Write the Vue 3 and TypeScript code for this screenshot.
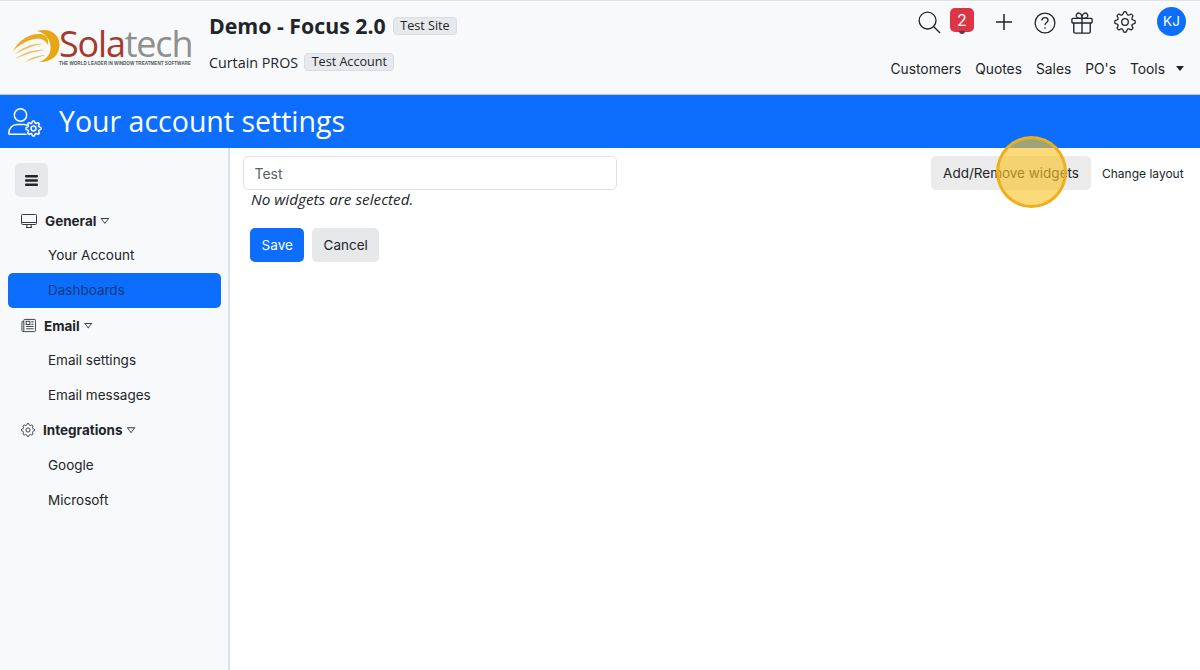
<script setup lang="ts">
const topLinks: string[] = ['Customers', 'Quotes', 'Sales', "PO's"]

function gearPath(cx: number, cy: number, outer: number, inner: number, teeth: number): string {
  const step = (Math.PI * 2) / teeth
  const pt = (a: number, r: number) =>
    `${(cx + Math.sin(a) * r).toFixed(2)} ${(cy - Math.cos(a) * r).toFixed(2)}`
  let d = ''
  for (let i = 0; i < teeth; i++) {
    const a = i * step
    d += `${i === 0 ? 'M' : 'L'}${pt(a - step * 0.17, outer)} `
    d += `Q${pt(a, outer + 0.5)} ${pt(a + step * 0.17, outer)} `
    d += `Q${pt(a + step * 0.3, inner + 0.3)} ${pt(a + step * 0.5, inner)} `
    d += `Q${pt(a + step * 0.7, inner + 0.3)} ${pt(a + step * 0.83, outer)} `
  }
  return d + 'Z'
}
const gear24 = gearPath(12, 12, 11, 8.2, 8)
const bannerGear = gearPath(25.5, 21.5, 7.4, 5.5, 8)
</script>

<template>
  <div class="page">
    <header class="header">
      <div class="logo">
        <svg class="swoosh" viewBox="0 0 48 36" width="48" height="36">
          <path d="M24 2C34 -1 46 3 46.5 15C47 27 37 34 26 33C33 31 38.5 25 37.5 16.5C36.6 9 31 3.5 24 2Z" fill="#e8a612" />
          <path d="M0 22C5 12 16 4 28 5C34 6 36 11 35 16C32 10 27 9 22 10C14 11 6 16 0 22Z" fill="#eaaa1c" />
          <path d="M1 26C9 19 19 14 30 15C21 16 11 20 1 26Z" fill="#f0bd55" />
          <path d="M2 30C10 24 21 20 32 21C23 22 13 25 2 30Z" fill="#f1c367" />
          <path d="M12 33C19 28 26 26 33 26C26 28 20 30 12 33Z" fill="#f0c060" />
        </svg>
        <div class="logo-text">
          <div class="wordmark"><span class="sola">Sola</span><span class="tech">tech</span></div>
          <div class="tagline">THE WORLD LEADER IN WINDOW TREATMENT SOFTWARE</div>
        </div>
      </div>
      <div class="site">
        <div class="site-row first">
          <span class="site-name">Demo - Focus 2.0</span>
          <span class="tag">Test Site</span>
        </div>
        <div class="site-row second">
          <span class="account">Curtain PROS</span>
          <span class="tag">Test Account</span>
        </div>
      </div>
      <div class="right">
        <div class="icons">
          <svg class="ic search" viewBox="0 0 24 24" width="23" height="23" fill="none" stroke="#212529" stroke-width="1.4">
            <circle cx="10" cy="10" r="8.8" /><path d="M16.5 16.5L23 23" />
          </svg>
          <span class="badge">2</span>
          <svg class="ic plus" viewBox="0 0 20 20" width="20" height="20" fill="none" stroke="#212529" stroke-width="1.5">
            <path d="M10 2V18M2 10H18" />
          </svg>
          <svg class="ic help" viewBox="0 0 24 24" width="22" height="22" fill="none" stroke="#212529" stroke-width="1.4">
            <circle cx="12" cy="12" r="10.8" />
            <path d="M8.6 9.2C8.7 7.2 10.2 6.2 12 6.2C13.9 6.2 15.3 7.4 15.3 9C15.3 11.4 12 11.6 12 14.2" />
            <circle cx="12" cy="17.4" r="0.9" fill="#212529" stroke="none" />
          </svg>
          <svg class="ic gift" viewBox="0 0 24 24" width="22" height="22" fill="none" stroke="#212529" stroke-width="1.5">
            <rect x="1" y="7" width="22" height="5" rx="1" />
            <path d="M3 12V21.5C3 22.3 3.7 23 4.5 23H19.5C20.3 23 21 22.3 21 21.5V12M12 7V23" />
            <path d="M12 7C10 7 6.5 7 5.8 4.8C5.2 2.6 7 0.8 9 1.2C11 1.7 12 4.5 12 7ZM12 7C14 7 17.5 7 18.2 4.8C18.8 2.6 17 0.8 15 1.2C13 1.7 12 4.5 12 7Z" />
          </svg>
          <svg class="ic cog" viewBox="0 0 24 24" width="22" height="22" fill="none" stroke="#212529" stroke-width="1.4">
            <circle cx="12" cy="12" r="3.6" />
            <path :d="gear24" stroke-linejoin="round" />
          </svg>
          <span class="avatar">KJ</span>
        </div>
        <nav class="nav">
          <span v-for="link in topLinks" :key="link">{{ link }}</span>
          <span class="tools">Tools<i class="caret"></i></span>
        </nav>
      </div>
    </header>

    <section class="banner">
      <svg viewBox="0 0 36 30" width="36" height="30" fill="none" stroke="#fff" stroke-width="1.5">
        <circle cx="12.5" cy="8" r="6.2" />
        <path d="M0.8 26.5C0.8 21 4.5 17.6 9 17.6H16C17 17.6 18 17.8 19 18.2M0.8 26.5C0.8 27 1.2 27.3 1.8 27.3H18" stroke-linecap="round" />
        <circle cx="25.5" cy="21.5" r="2.4" />
        <path :d="bannerGear" stroke-linejoin="round" />
      </svg>
      <h1>Your account settings</h1>
    </section>

    <div class="body">
      <aside class="sidebar">
        <button class="toggle" type="button" aria-label="Toggle menu">
          <svg viewBox="0 0 14 12" width="13" height="11" fill="#212529">
            <rect x="0" y="0" width="14" height="2.6" rx="0.8" />
            <rect x="0" y="4.7" width="14" height="2.6" rx="0.8" />
            <rect x="0" y="9.4" width="14" height="2.6" rx="0.8" />
          </svg>
        </button>

        <div class="group general">
          <svg viewBox="0 0 16 16" width="16" height="16" fill="none" stroke="#343a40" stroke-width="1">
            <rect x="0.5" y="1.5" width="15" height="10" rx="1" />
            <path d="M0.5 9.5H15.5M5 14.5H11M6 11.5L5.6 14.5M10 11.5L10.4 14.5" />
          </svg>
          <b>General</b><i class="tri"></i>
        </div>
        <a class="item">Your Account</a>
        <a class="item active">Dashboards</a>

        <div class="group email">
          <svg viewBox="0 0 16 16" width="15" height="15" fill="none" stroke="#343a40" stroke-width="1">
            <rect x="3" y="1.5" width="12.5" height="13" rx="1" />
            <path d="M3 4H1V13.5C1 14.2 1.6 14.5 2 14.5H3.5" />
            <rect x="5.5" y="3.5" width="4" height="3.5" />
            <path d="M11 4H13.5M11 6.5H13.5M5.5 9H13.5M5.5 11.5H13.5" />
          </svg>
          <b>Email</b><i class="tri"></i>
        </div>
        <a class="item">Email settings</a>
        <a class="item">Email messages</a>

        <div class="group integrations">
          <svg viewBox="0 0 24 24" width="14" height="14" fill="none" stroke="#343a40" stroke-width="1.6">
            <circle cx="12" cy="12" r="3.6" />
            <path :d="gear24" stroke-linejoin="round" />
          </svg>
          <b>Integrations</b><i class="tri"></i>
        </div>
        <a class="item">Google</a>
        <a class="item">Microsoft</a>
      </aside>

      <main class="main">
        <div class="toolbar">
          <input class="name" type="text" value="Test" />
          <div class="actions">
            <button class="widgets" type="button">Add/Remove widgets</button>
            <button class="layout" type="button">Change layout</button>
          </div>
        </div>
        <p class="empty">No widgets are selected.</p>
        <div class="form-actions">
          <button class="save" type="button">Save</button>
          <button class="cancel" type="button">Cancel</button>
        </div>
      </main>
    </div>

    <div class="highlight"></div>
  </div>
</template>

<style>
html, body { margin: 0; background: #fff; }
</style>

<style scoped>
.page {
  position: relative;
  width: 1200px;
  height: 670px;
  overflow: hidden;
  display: flex;
  flex-direction: column;
  font-family: Inter, "Liberation Sans", sans-serif;
  color: #212529;
  background: #fff;
}
.header {
  box-sizing: border-box;
  height: 95px;
  flex: none;
  display: flex;
  background: #f8f9fa;
  border-top: 1px solid #dfe3e8;
  border-bottom: 1px solid #b9c6dc;
  padding-left: 13px;
}
.logo {
  width: 196px;
  flex: none;
  display: flex;
  align-items: flex-start;
  padding-top: 28px;
  box-sizing: border-box;
}
.swoosh { flex: none; margin-right: -2px; }
.logo-text { margin-top: -3px; }
.wordmark {
  font-family: "Open Sans", sans-serif;
  font-size: 36px;
  line-height: 36px;
  letter-spacing: -1.2px;
  white-space: nowrap;
}
.sola { color: #a7382c; }
.tech { color: #8f8f8f; }
.tagline {
  font-family: "Liberation Sans", sans-serif;
  font-size: 4.6px;
  font-weight: 700;
  line-height: 6px;
  color: #55565a;
  white-space: nowrap;
  margin-top: -1px;
}
.site { font-family: "Open Sans", sans-serif; }
.site-row { display: flex; align-items: center; white-space: nowrap; }
.first { margin-top: 11px; height: 28px; }
.second { margin-top: 9px; height: 26px; }
.site-name { font-size: 21.3px; font-weight: 700; margin-right: 7px; line-height: 26px; }
.account { font-size: 14.3px; margin-right: 6px; }
.tag {
  font-size: 12.6px;
  line-height: 16px;
  padding: 0 6.5px;
  background: #e8e9ec;
  border: 1px solid #d9dce0;
  border-radius: 4px;
}
.right {
  margin-left: auto;
  display: flex;
  flex-direction: column;
  align-items: flex-end;
}
.icons { position: relative; width: 290px; height: 50px; display: block; }
.ic { position: absolute; }
.search { left: 8px; top: 10px; }
.badge {
  position: absolute;
  left: 40px;
  top: 7px;
  width: 24px;
  height: 24px;
  border-radius: 5px;
  background: #dc3545;
  color: #fff;
  font-size: 16px;
  line-height: 24px;
  text-align: center;
}
.badge::after {
  content: "";
  position: absolute;
  left: 9px;
  bottom: -2px;
  width: 6px;
  height: 3px;
  border-radius: 0 0 3px 3px;
  background: #5b3a42;
}
.plus { left: 84px; top: 11px; }
.help { left: 124px; top: 11px; }
.gift { left: 161px; top: 11px; }
.cog { left: 204px; top: 10px; }
.avatar {
  position: absolute;
  left: 247px;
  top: 6px;
  width: 29px;
  height: 29px;
  border-radius: 50%;
  background: #0d6efd;
  color: #fff;
  font-size: 13.5px;
  line-height: 29px;
  text-align: center;
}
.nav {
  display: flex;
  gap: 14px;
  font-size: 13.8px;
  line-height: 20px;
  margin-top: 8px;
  padding-right: 16px;
  white-space: nowrap;
}
.tools { display: flex; align-items: center; }
.caret {
  margin-left: 11px;
  width: 0;
  height: 0;
  border-left: 4px solid transparent;
  border-right: 4px solid transparent;
  border-top: 5px solid #212529;
  margin-top: -2px;
}
.banner {
  box-sizing: border-box;
  height: 53px;
  flex: none;
  display: flex;
  align-items: center;
  background: #0d6efd;
  padding-left: 8px;
  color: #fff;
}
.banner h1 {
  margin: -1px 0 0 15px;
  font-family: "Open Sans", sans-serif;
  font-size: 28.5px;
  font-weight: 400;
  line-height: 36px;
}
.body { flex: 1; display: flex; min-height: 0; }
.sidebar {
  box-sizing: border-box;
  width: 230px;
  flex: none;
  background: #f8f9fa;
  border-right: 2px solid #dee2e6;
  padding: 15px 7.5px 0;
  font-size: 13.5px;
}
.toggle {
  display: flex;
  align-items: center;
  justify-content: center;
  width: 33.5px;
  height: 34px;
  margin-left: 7px;
  padding: 0;
  border: 0;
  border-radius: 5px;
  background: #e7e8ea;
}
.group {
  display: flex;
  align-items: center;
  height: 34.9px;
  font-size: 13.5px;
}
.group b { font-weight: 700; }
.group svg { flex: none; }
.general { padding-left: 13.5px; margin-top: 6.5px; }
.general svg { margin-right: 8px; }
.email { padding-left: 13.5px; }
.email svg { margin-right: 8px; }
.integrations { padding-left: 13.5px; }
.integrations svg { margin-right: 8px; }
.tri {
  position: relative;
  margin-left: 4px;
  width: 9px;
  height: 6px;
}
.tri::before {
  content: "";
  position: absolute;
  inset: 0;
  background: #343a40;
  clip-path: polygon(0 0, 100% 0, 50% 100%);
}
.tri::after {
  content: "";
  position: absolute;
  left: 1.6px;
  top: 1px;
  width: 5.8px;
  height: 3.7px;
  background: #f8f9fa;
  clip-path: polygon(0 0, 100% 0, 50% 100%);
}
.item {
  display: block;
  height: 34.9px;
  line-height: 35.9px;
  padding-left: 40.5px;
  border-radius: 5px;
  color: #212529;
  white-space: nowrap;
}
.item.active { background: #0d6efd; color: #123a80; }
.main { flex: 1; min-width: 0; padding: 8px 16px 0 13px; }
.toolbar { display: flex; justify-content: space-between; align-items: flex-start; }
.name {
  box-sizing: border-box;
  width: 374px;
  height: 34px;
  padding: 0 10.5px;
  border: 1px solid #dee2e6;
  border-radius: 5px;
  background: #fff;
  color: #595f66;
  font: 14px Inter, "Liberation Sans", sans-serif;
  outline: none;
}
.actions { display: flex; align-items: center; }
.actions button {
  height: 34px;
  border: 0;
  border-radius: 5px;
  padding: 0 12px;
  color: #212529;
  font: 13.5px Inter, "Liberation Sans", sans-serif;
  white-space: nowrap;
}
.widgets { background: #ebebeb; width: 160px; }
.layout { background: transparent; margin-left: -1px; font-size: 12px !important; padding: 0 0 0 12px !important; width: 94px; text-align: left; }
.empty {
  margin: -1px 0 0 8px;
  font-family: "Open Sans", sans-serif;
  font-size: 15.3px;
  font-style: italic;
  line-height: 20px;
}
.form-actions { display: flex; gap: 7.5px; margin: 19px 0 0 7px; }
.form-actions button {
  height: 34px;
  border: 0;
  border-radius: 5px;
  padding: 0 11.6px;
  font: 13.5px Inter, "Liberation Sans", sans-serif;
}
.save { background: #0d6efd; color: #fff; }
.cancel { background: #e7e8ea; color: #212529; }
.highlight {
  position: absolute;
  left: 996px;
  top: 136px;
  width: 71px;
  height: 72px;
  box-sizing: border-box;
  border: 3px solid #edb01c;
  border-radius: 50%;
  background: rgba(250, 196, 40, 0.62);
}
</style>
